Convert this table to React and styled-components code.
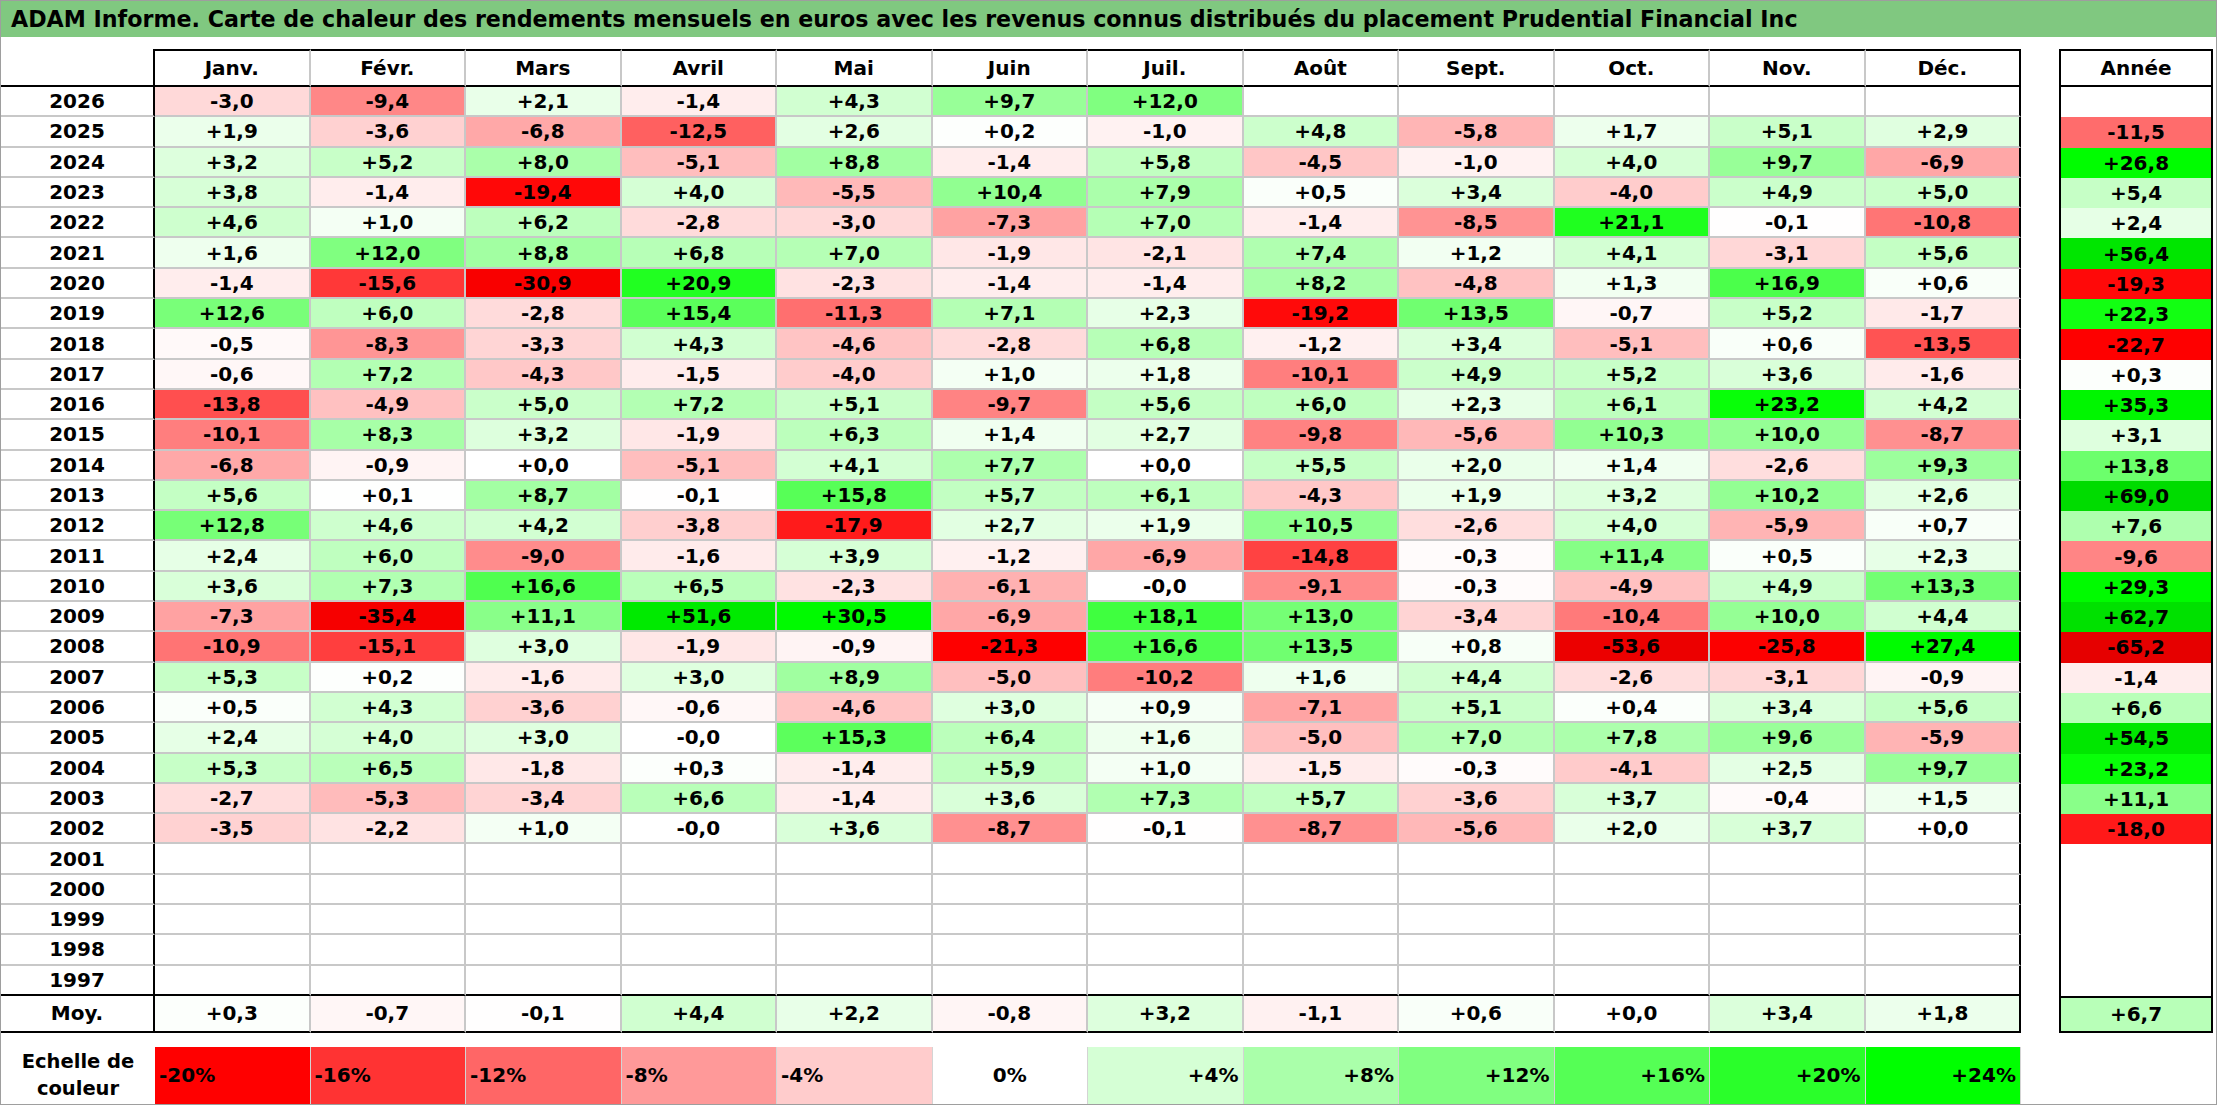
import React from 'react'
import styled, { createGlobalStyle, css } from 'styled-components'

const GlobalStyle = createGlobalStyle`
  html, body {
    margin: 0;
    padding: 0;
    background: #fff;
  }
  body {
    font-family: "DejaVu Sans", "Liberation Sans", sans-serif;
    color: #000;
  }
`

const MONTHS = ['Janv.', 'Févr.', 'Mars', 'Avril', 'Mai', 'Juin', 'Juil.', 'Août', 'Sept.', 'Oct.', 'Nov.', 'Déc.']

const ROWS = [
  ['2026', '-3,0 -9,4 +2,1 -1,4 +4,3 +9,7 +12,0', ''],
  ['2025', '+1,9 -3,6 -6,8 -12,5 +2,6 +0,2 -1,0 +4,8 -5,8 +1,7 +5,1 +2,9', '-11,5'],
  ['2024', '+3,2 +5,2 +8,0 -5,1 +8,8 -1,4 +5,8 -4,5 -1,0 +4,0 +9,7 -6,9', '+26,8'],
  ['2023', '+3,8 -1,4 -19,4 +4,0 -5,5 +10,4 +7,9 +0,5 +3,4 -4,0 +4,9 +5,0', '+5,4'],
  ['2022', '+4,6 +1,0 +6,2 -2,8 -3,0 -7,3 +7,0 -1,4 -8,5 +21,1 -0,1 -10,8', '+2,4'],
  ['2021', '+1,6 +12,0 +8,8 +6,8 +7,0 -1,9 -2,1 +7,4 +1,2 +4,1 -3,1 +5,6', '+56,4'],
  ['2020', '-1,4 -15,6 -30,9 +20,9 -2,3 -1,4 -1,4 +8,2 -4,8 +1,3 +16,9 +0,6', '-19,3'],
  ['2019', '+12,6 +6,0 -2,8 +15,4 -11,3 +7,1 +2,3 -19,2 +13,5 -0,7 +5,2 -1,7', '+22,3'],
  ['2018', '-0,5 -8,3 -3,3 +4,3 -4,6 -2,8 +6,8 -1,2 +3,4 -5,1 +0,6 -13,5', '-22,7'],
  ['2017', '-0,6 +7,2 -4,3 -1,5 -4,0 +1,0 +1,8 -10,1 +4,9 +5,2 +3,6 -1,6', '+0,3'],
  ['2016', '-13,8 -4,9 +5,0 +7,2 +5,1 -9,7 +5,6 +6,0 +2,3 +6,1 +23,2 +4,2', '+35,3'],
  ['2015', '-10,1 +8,3 +3,2 -1,9 +6,3 +1,4 +2,7 -9,8 -5,6 +10,3 +10,0 -8,7', '+3,1'],
  ['2014', '-6,8 -0,9 +0,0 -5,1 +4,1 +7,7 +0,0 +5,5 +2,0 +1,4 -2,6 +9,3', '+13,8'],
  ['2013', '+5,6 +0,1 +8,7 -0,1 +15,8 +5,7 +6,1 -4,3 +1,9 +3,2 +10,2 +2,6', '+69,0'],
  ['2012', '+12,8 +4,6 +4,2 -3,8 -17,9 +2,7 +1,9 +10,5 -2,6 +4,0 -5,9 +0,7', '+7,6'],
  ['2011', '+2,4 +6,0 -9,0 -1,6 +3,9 -1,2 -6,9 -14,8 -0,3 +11,4 +0,5 +2,3', '-9,6'],
  ['2010', '+3,6 +7,3 +16,6 +6,5 -2,3 -6,1 -0,0 -9,1 -0,3 -4,9 +4,9 +13,3', '+29,3'],
  ['2009', '-7,3 -35,4 +11,1 +51,6 +30,5 -6,9 +18,1 +13,0 -3,4 -10,4 +10,0 +4,4', '+62,7'],
  ['2008', '-10,9 -15,1 +3,0 -1,9 -0,9 -21,3 +16,6 +13,5 +0,8 -53,6 -25,8 +27,4', '-65,2'],
  ['2007', '+5,3 +0,2 -1,6 +3,0 +8,9 -5,0 -10,2 +1,6 +4,4 -2,6 -3,1 -0,9', '-1,4'],
  ['2006', '+0,5 +4,3 -3,6 -0,6 -4,6 +3,0 +0,9 -7,1 +5,1 +0,4 +3,4 +5,6', '+6,6'],
  ['2005', '+2,4 +4,0 +3,0 -0,0 +15,3 +6,4 +1,6 -5,0 +7,0 +7,8 +9,6 -5,9', '+54,5'],
  ['2004', '+5,3 +6,5 -1,8 +0,3 -1,4 +5,9 +1,0 -1,5 -0,3 -4,1 +2,5 +9,7', '+23,2'],
  ['2003', '-2,7 -5,3 -3,4 +6,6 -1,4 +3,6 +7,3 +5,7 -3,6 +3,7 -0,4 +1,5', '+11,1'],
  ['2002', '-3,5 -2,2 +1,0 -0,0 +3,6 -8,7 -0,1 -8,7 -5,6 +2,0 +3,7 +0,0', '-18,0'],
  ['2001', '', ''],
  ['2000', '', ''],
  ['1999', '', ''],
  ['1998', '', ''],
  ['1997', '', ''],
].map(([year, months, total]) => {
  const vals = months ? months.split(' ') : []
  while (vals.length < 12) vals.push('')
  return { year, vals, total }
})

const AVERAGES = '+0,3 -0,7 -0,1 +4,4 +2,2 -0,8 +3,2 -1,1 +0,6 +0,0 +3,4 +1,8'.split(' ')
const AVERAGE_TOTAL = '+6,7'
const SCALE = [-20, -16, -12, -8, -4, 0, 4, 8, 12, 16, 20, 24]

const GRID = '#c8c8c8'
const ROW_H = '30.3px'

// couleur de la carte : rouge jusqu'à -20 %, vert jusqu'à +24 %
const heat = (text) => {
  if (text === '' || text == null) return '#ffffff'
  const v = typeof text === 'number' ? text : parseFloat(String(text).replace(',', '.'))
  if (v >= 0) {
    const c = Math.round(255 * (1 - Math.min(v / 24, 1)))
    const g = v > 24 ? Math.round(255 - Math.min((v - 24) / 45, 1) * 35) : 255
    return `rgb(${c},${g},${c})`
  }
  const c = Math.round(255 * (1 - Math.min(-v / 20, 1)))
  const r = -v > 20 ? Math.round(255 - Math.min((-v - 20) / 45, 1) * 25) : 255
  return `rgb(${r},${c},${c})`
}

const Frame = styled.div`
  box-sizing: border-box;
  width: 2217px;
  height: 1105px;
  border: 1px solid #9e9e9e;
  display: flex;
  flex-direction: column;
  overflow: hidden;
`

const TitleBar = styled.div`
  height: 36px;
  flex: none;
  background: #80c880;
  display: flex;
  align-items: center;
  padding-left: 10px;
  font-size: 22.2px;
  font-weight: 700;
  white-space: nowrap;
`

const Content = styled.div`
  display: flex;
  flex-direction: column;
  padding: 12px 3px 0 0;
`

const Tables = styled.div`
  display: flex;
  align-items: flex-start;
  gap: 38px;
`

const MonthGrid = styled.div`
  display: grid;
  grid-template-columns: 154px repeat(12, 155.5px);
  grid-template-rows: 38px repeat(30, ${ROW_H}) 37px;
`

const cellText = css`
  box-sizing: border-box;
  display: flex;
  align-items: center;
  justify-content: center;
  font-size: 20px;
  font-weight: 700;
  white-space: nowrap;
`

const YearHead = styled.div`
  ${cellText};
  border-bottom: 2px solid #000;
  border-right: 2px solid #000;
`

const MonthHead = styled.div`
  ${cellText};
  border-top: 2px solid #000;
  border-bottom: 2px solid #000;
  border-right: 2px solid ${(p) => (p.$last ? '#000' : GRID)};
`

const YearCell = styled.div`
  ${cellText};
  border-right: 2px solid #000;
  border-bottom: 2px solid ${(p) => (p.$closing ? '#000' : GRID)};
`

const ValueCell = styled.div.attrs((p) => ({ style: { background: p.$bg } }))`
  ${cellText};
  border-right: 2px solid ${(p) => (p.$last ? '#000' : GRID)};
  border-bottom: 2px solid ${(p) => (p.$closing ? '#000' : GRID)};
`

const TotalBox = styled.div`
  box-sizing: border-box;
  width: 154px;
  display: grid;
  grid-template-rows: 36px repeat(30, ${ROW_H}) 35px;
  border: 2px solid #000;
`

const TotalHead = styled.div`
  ${cellText};
  border-bottom: 2px solid #000;
`

const TotalCell = styled.div.attrs((p) => ({ style: { background: p.$bg } }))`
  ${cellText};
  border-top: ${(p) => (p.$average ? '2px solid #000' : 'none')};
`

const LegendRow = styled.div`
  display: grid;
  grid-template-columns: 154px repeat(12, 155.5px);
  height: 57px;
  margin-top: 14px;
`

const LegendLabel = styled.div`
  display: flex;
  align-items: center;
  justify-content: center;
  text-align: center;
  font-size: 19.5px;
  font-weight: 700;
  line-height: 27px;
`

const LegendCell = styled.div.attrs((p) => ({ style: { background: p.$bg } }))`
  box-sizing: border-box;
  display: flex;
  align-items: center;
  justify-content: ${(p) => p.$align};
  padding: 0 4px;
  border-right: 1px solid #d4d4d4;
  font-size: 20px;
  font-weight: 700;
`

const legendAlign = (v) => (v < 0 ? 'flex-start' : v === 0 ? 'center' : 'flex-end')

export default function App() {
  return (
    <>
      <GlobalStyle />
      <Frame>
        <TitleBar>
          ADAM Informe. Carte de chaleur des rendements mensuels en euros avec les revenus connus distribués du placement Prudential Financial Inc
        </TitleBar>
        <Content>
          <Tables>
            <MonthGrid>
              <YearHead />
              {MONTHS.map((m, i) => (
                <MonthHead key={m} $last={i === 11}>{m}</MonthHead>
              ))}
              {ROWS.map((row, r) => (
                <React.Fragment key={row.year}>
                  <YearCell $closing={r === ROWS.length - 1}>{row.year}</YearCell>
                  {row.vals.map((v, i) => (
                    <ValueCell key={i} $bg={heat(v)} $last={i === 11} $closing={r === ROWS.length - 1}>
                      {v}
                    </ValueCell>
                  ))}
                </React.Fragment>
              ))}
              <YearCell $closing>Moy.</YearCell>
              {AVERAGES.map((v, i) => (
                <ValueCell key={i} $bg={heat(v)} $last={i === 11} $closing>
                  {v}
                </ValueCell>
              ))}
            </MonthGrid>

            <TotalBox>
              <TotalHead>Année</TotalHead>
              {ROWS.map((row) => (
                <TotalCell key={row.year} $bg={heat(row.total)}>{row.total}</TotalCell>
              ))}
              <TotalCell $average $bg={heat(AVERAGE_TOTAL)}>{AVERAGE_TOTAL}</TotalCell>
            </TotalBox>
          </Tables>

          <LegendRow>
            <LegendLabel>
              Echelle de
              <br />
              couleur
            </LegendLabel>
            {SCALE.map((v) => (
              <LegendCell key={v} $bg={heat(v)} $align={legendAlign(v)}>
                {v > 0 ? `+${v}%` : `${v}%`}
              </LegendCell>
            ))}
          </LegendRow>
        </Content>
      </Frame>
    </>
  )
}
